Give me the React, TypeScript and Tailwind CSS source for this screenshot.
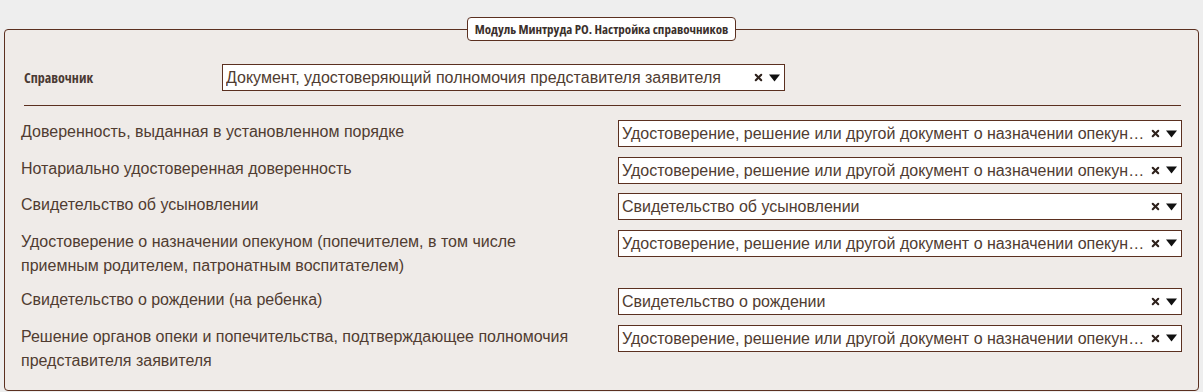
import { X } from 'lucide-react'

const rows = [
  { label: 'Доверенность, выданная в установленном порядке', value: 'Удостоверение, решение или другой документ о назначении опекуна (попечителя)' },
  { label: 'Нотариально удостоверенная доверенность', value: 'Удостоверение, решение или другой документ о назначении опекуна (попечителя)' },
  { label: 'Свидетельство об усыновлении', value: 'Свидетельство об усыновлении' },
  { label: 'Удостоверение о назначении опекуном (попечителем, в том числе приемным родителем, патронатным воспитателем)', value: 'Удостоверение, решение или другой документ о назначении опекуна (попечителя)' },
  { label: 'Свидетельство о рождении (на ребенка)', value: 'Свидетельство о рождении' },
  { label: 'Решение органов опеки и попечительства, подтверждающее полномочия представителя заявителя', value: 'Удостоверение, решение или другой документ о назначении опекуна (попечителя)' },
]

const condensed = "font-['Open_Sans','DejaVu_Sans_Condensed',sans-serif] font-stretch-condensed"

function Select({ value, className }: { value: string; className?: string }) {
  return (
    <div className={`flex items-center h-[27px] border border-[#5b3020] bg-white pl-[3px] pr-[4px] ${className ?? ''}`}>
      <span className="flex-1 min-w-0 truncate text-[16px] leading-[25px] text-[#503c31]">{value}</span>
      <span className="ml-[4px] text-[#2e211c] flex items-center">
        <X size={11} strokeWidth={4.5} />
      </span>
      <svg width="11" height="8" viewBox="0 0 11 8" className="ml-[5px]">
        <path d="M0 0.5 H11 L5.5 7.5 Z" fill="#111" />
      </svg>
    </div>
  )
}

export default function App() {
  return (
    <div className="min-h-[392px] bg-[#eeeeee] px-[4px] pt-[17px] font-['Liberation_Sans',Arial,sans-serif]">
      <fieldset className="border border-[#5b3020] rounded-[4px] bg-[#efebe8] px-[16px] pb-[16px]">
        <legend className={`mx-auto h-[24px] px-[7px] bg-white border border-[#5b3020] rounded-[4px] font-bold text-[13px] leading-[22px] text-[#3b302c] ${condensed}`}>
          Модуль Минтруда РО. Настройка справочников
        </legend>

        {/* Справочник */}
        <div className="flex items-center pt-[23px] pl-[3px]">
          <label className={`w-[198px] font-bold text-[14px] text-[#4a3a33] ${condensed}`}>Справочник</label>
          <Select
            value="Документ, удостоверяющий полномочия представителя заявителя"
            className="w-[563px]"
          />
        </div>

        <div className="ml-[3px] mr-[1px] mt-[14px] mb-[14px] border-t border-[#5b3020]" />

        {/* Rows */}
        <div className="flex flex-col gap-[9.5px]">
          {rows.map((r, i) => (
            <div key={i} className="flex items-start">
              <div className="flex-1 pr-[20px] text-[16px] leading-[24.5px] text-[#503c31]">{r.label}</div>
              <Select value={r.value} className="w-[564px] shrink-0" />
            </div>
          ))}
        </div>
      </fieldset>
    </div>
  )
}
